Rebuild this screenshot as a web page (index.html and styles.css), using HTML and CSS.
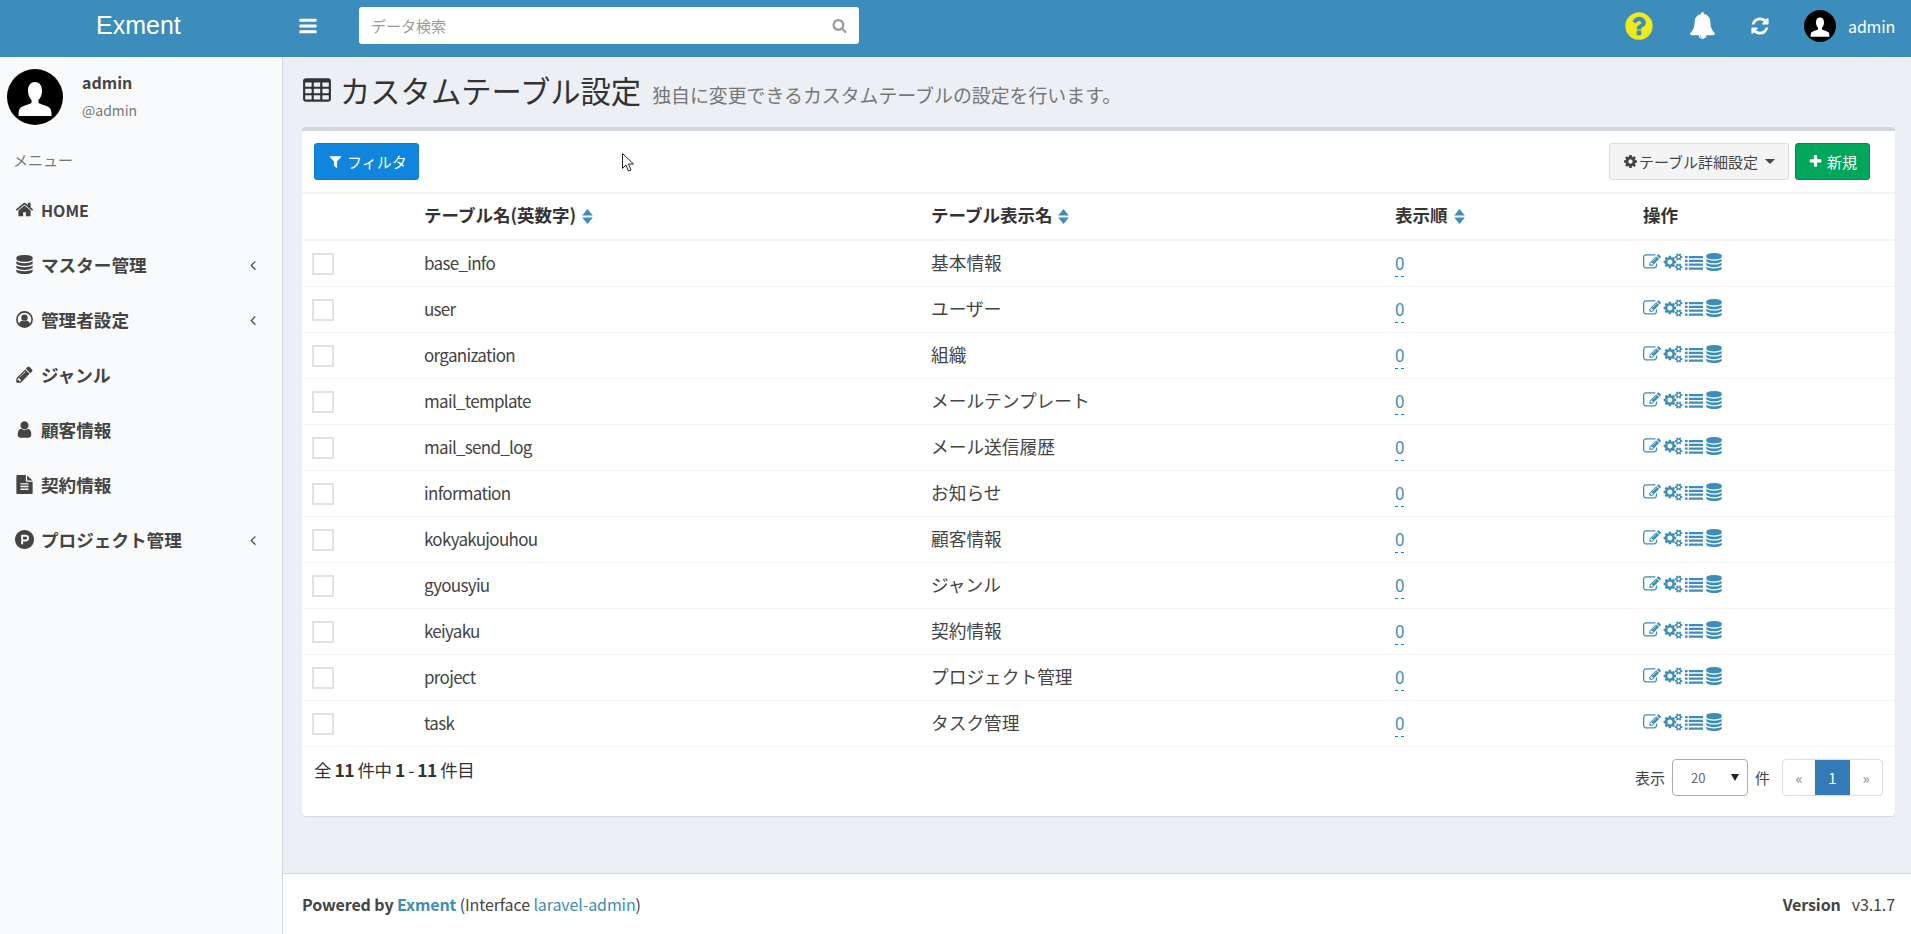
FILE: index.html
```html
<!DOCTYPE html>
<html lang="ja">
<head>
    <meta charset="UTF-8">
    <meta name="viewport" content="width=device-width, initial-scale=1.0">
    <title>カスタムテーブル設定 - Exment</title>
    <link rel="stylesheet" href="styles.css">
</head>
<body>
    <!-- icons -->
    <svg class="icon-defs" xmlns="http://www.w3.org/2000/svg">
        <symbol id="i-bars" viewBox="0 0 1792 1792"><path d="M1664 1344v128q0 26-19 45t-45 19h-1408q-26 0-45-19t-19-45v-128q0-26 19-45t45-19h1408q26 0 45 19t19 45zm0-512v128q0 26-19 45t-45 19h-1408q-26 0-45-19t-19-45v-128q0-26 19-45t45-19h1408q26 0 45 19t19 45zm0-512v128q0 26-19 45t-45 19h-1408q-26 0-45-19t-19-45v-128q0-26 19-45t45-19h1408q26 0 45 19t19 45z"/></symbol>
        <symbol id="i-search" viewBox="0 0 1792 1792"><path d="M1216 832q0-185-131.500-316.500t-316.500-131.500-316.500 131.500-131.500 316.500 131.500 316.500 316.500 131.500 316.500-131.500 131.500-316.500zm512 832q0 52-38 90t-90 38q-54 0-90-38l-343-342q-179 124-399 124-143 0-273.500-55.500t-225-150-150-225-55.500-273.500 55.500-273.500 150-225 225-150 273.500-55.500 273.500 55.500 225 150 150 225 55.500 273.500q0 220-124 399l343 343q37 37 37 90z"/></symbol>
        <symbol id="i-question" viewBox="0 0 1792 1792"><path d="M1024 1376v-192q0-14-9-23t-23-9h-192q-14 0-23 9t-9 23v192q0 14 9 23t23 9h192q14 0 23-9t9-23zm256-672q0-88-55.500-163t-138.500-116-170-41q-243 0-371 213-15 24 8 42l132 100q7 6 19 6 16 0 25-12 53-68 86-92 34-24 86-24 48 0 85.500 26t37.500 59q0 38-20 61t-68 45q-63 28-115.500 86.500t-52.500 125.500v36q0 14 9 23t23 9h192q14 0 23-9t9-23q0-19 21.500-49.500t54.500-49.500q32-18 49-28.500t46-35 44.500-48 28-60.500 12.500-81zm384 192q0 209-103 385.500t-279.500 279.500-385.500 103-385.500-103-279.500-279.500-103-385.500 103-385.500 279.500-279.500 385.500-103 385.500 103 279.500 279.500 103 385.500z"/></symbol>
        <symbol id="i-bell" viewBox="0 0 1792 1792"><path d="M912 1696q0-16-16-16-59 0-101.500-42.500t-42.500-101.500q0-16-16-16t-16 16q0 73 51.500 124.500t124.500 51.500q16 0 16-16zm816-288q0 52-38 90t-90 38h-448q0 106-75 181t-181 75-181-75-75-181h-448q-52 0-90-38t-38-90q50-42 91-88t85-119.500 74.500-158.500 50-206 19.500-260q0-152 117-282.500t307-158.500q-8-19-8-39 0-40 28-68t68-28 68 28 28 68q0 20-8 39 190 28 307 158.500t117 282.500q0 139 19.500 260t50 206 74.500 158.500 85 119.500 91 88z"/></symbol>
        <symbol id="i-refresh" viewBox="0 0 1792 1792"><path d="M1639 1056q0 5-1 7-64 268-268 434.500t-478 166.500q-146 0-282.500-55t-243.500-157l-129 129q-19 19-45 19t-45-19-19-45v-448q0-26 19-45t45-19h448q26 0 45 19t19 45-19 45l-137 137q71 66 161 102t187 36q134 0 250-65t186-179q11-17 53-117 8-23 30-23h192q13 0 22.500 9.500t9.500 22.500zm25-800v448q0 26-19 45t-45 19h-448q-26 0-45-19t-19-45 19-45l138-138q-148-137-349-137-134 0-250 65t-186 179q-11 17-53 117-8 23-30 23h-199q-13 0-22.500-9.500t-9.500-22.500v-7q65-268 270-434.500t480-166.500q146 0 284 55.500t245 156.500l130-129q19-19 45-19t45 19 19 45z"/></symbol>
        <symbol id="i-user" viewBox="0 0 1792 1792"><path d="M1536 1399q0 109-62.500 187t-150.500 78h-854q-88 0-150.500-78t-62.500-187q0-85 8.500-160.500t31.500-152 58.500-131 94-89 134.500-34.500q131 128 313 128t313-128q76 0 134.500 34.500t94 89 58.500 131 31.500 152 8.500 160.500zm-256-887q0 159-112.500 271.500t-271.500 112.500-271.500-112.500-112.500-271.500 112.500-271.500 271.500-112.500 271.500 112.500 112.500 271.500z"/></symbol>
        <symbol id="i-table" viewBox="0 0 1792 1792"><path d="M576 1376v-192q0-14-9-23t-23-9h-320q-14 0-23 9t-9 23v192q0 14 9 23t23 9h320q14 0 23-9t9-23zm0-384v-192q0-14-9-23t-23-9h-320q-14 0-23 9t-9 23v192q0 14 9 23t23 9h320q14 0 23-9t9-23zm512 384v-192q0-14-9-23t-23-9h-320q-14 0-23 9t-9 23v192q0 14 9 23t23 9h320q14 0 23-9t9-23zm-512-768v-192q0-14-9-23t-23-9h-320q-14 0-23 9t-9 23v192q0 14 9 23t23 9h320q14 0 23-9t9-23zm512 384v-192q0-14-9-23t-23-9h-320q-14 0-23 9t-9 23v192q0 14 9 23t23 9h320q14 0 23-9t9-23zm512 384v-192q0-14-9-23t-23-9h-320q-14 0-23 9t-9 23v192q0 14 9 23t23 9h320q14 0 23-9t9-23zm-512-768v-192q0-14-9-23t-23-9h-320q-14 0-23 9t-9 23v192q0 14 9 23t23 9h320q14 0 23-9t9-23zm512 384v-192q0-14-9-23t-23-9h-320q-14 0-23 9t-9 23v192q0 14 9 23t23 9h320q14 0 23-9t9-23zm0-384v-192q0-14-9-23t-23-9h-320q-14 0-23 9t-9 23v192q0 14 9 23t23 9h320q14 0 23-9t9-23zm128-320v1088q0 66-47 113t-113 47h-1344q-66 0-113-47t-47-113v-1088q0-66 47-113t113-47h1344q66 0 113 47t47 113z"/></symbol>
        <symbol id="i-filter" viewBox="0 0 1792 1792"><path d="M1595 295q17 41-14 70l-493 493v742q0 42-39 59-13 5-25 5-27 0-45-19l-256-256q-19-19-19-45v-486l-493-493q-31-29-14-70 17-39 59-39h1280q42 0 59 39z"/></symbol>
        <symbol id="i-cog" viewBox="0 0 1792 1792"><path d="M1152 896q0-106-75-181t-181-75-181 75-75 181 75 181 181 75 181-75 75-181zm512-109v222q0 12-8 23t-20 13l-185 28q-19 54-39 91 35 50 107 138 10 12 10 25t-9 23q-27 37-99 108t-94 71q-12 0-26-9l-138-108q-44 23-91 38-16 136-29 186-7 28-36 28h-222q-14 0-24.500-8.500t-11.500-21.500l-28-184q-49-16-90-37l-141 107q-10 9-25 9-14 0-25-11-126-114-165-168-7-10-7-23 0-12 8-23 15-21 51-66.500t54-70.500q-27-50-41-99l-183-27q-13-2-21-12.500t-8-23.500v-222q0-12 8-23t19-13l186-28q14-46 39-92-40-57-107-138-10-12-10-24 0-10 9-23 26-36 98.500-107.500t94.500-71.500q13 0 26 10l138 107q44-23 91-38 16-136 29-186 7-28 36-28h222q14 0 24.500 8.500t11.500 21.500l28 184q49 16 90 37l142-107q9-9 24-9 13 0 25 10 129 119 165 170 7 8 7 22 0 12-8 23-15 21-51 66.500t-54 70.500q26 50 41 98l183 28q13 2 21 12.500t8 23.500z"/></symbol>
        <symbol id="i-plus" viewBox="0 0 1792 1792"><path d="M1600 736v192q0 40-28 68t-68 28h-416v416q0 40-28 68t-68 28h-192q-40 0-68-28t-28-68v-416h-416q-40 0-68-28t-28-68v-192q0-40 28-68t68-28h416v-416q0-40 28-68t68-28h192q40 0 68 28t28 68v416h416q40 0 68 28t28 68z"/></symbol>
        <symbol id="i-home" viewBox="0 0 1792 1792"><path d="M1472 992v480q0 26-19 45t-45 19h-384v-384h-256v384h-384q-26 0-45-19t-19-45v-480q0-1 .5-3t.5-3l575-474 575 474q1 2 1 6zm223-69l-62 74q-8 9-21 11h-3q-13 0-21-7l-692-577-692 577q-12 8-24 7-13-2-21-11l-62-74q-8-10-7-23.500t11-21.500l719-599q32-26 76-26t76 26l244 204v-195q0-14 9-23t23-9h192q14 0 23 9t9 23v408l219 182q10 8 11 21.500t-7 23.500z"/></symbol>
        <symbol id="i-database" viewBox="0 0 1792 1792"><path d="M896 768q237 0 443-43t325-127v170q0 69-103 128t-280 93.500-385 34.500-385-34.500-280-93.500-103-128v-170q119 84 325 127t443 43zm0 768q237 0 443-43t325-127v170q0 69-103 128t-280 93.500-385 34.500-385-34.500-280-93.500-103-128v-170q119 84 325 127t443 43zm0-384q237 0 443-43t325-127v170q0 69-103 128t-280 93.500-385 34.500-385-34.500-280-93.500-103-128v-170q119 84 325 127t443 43zm0-1152q208 0 385 34.500t280 93.500 103 128v128q0 69-103 128t-280 93.500-385 34.500-385-34.500-280-93.500-103-128v-128q0-69 103-128t280-93.500 385-34.500z"/></symbol>
        <symbol id="i-user-circle" viewBox="0 0 1792 1792"><circle cx="896" cy="896" r="720" fill="none" stroke="currentColor" stroke-width="150"/><circle cx="896" cy="720" r="300"/><path d="M380 1340q60-300 300-330 100 60 216 60t216-60q240 30 300 330-210 230-516 230t-516-230z"/></symbol>
        <symbol id="i-pencil" viewBox="0 0 1792 1792"><path d="M491 1536l91-91-235-235-91 91v107h128v128h107zm523-928q0-22-22-22-10 0-17 7l-542 542q-7 7-7 17 0 22 22 22 10 0 17-7l542-542q7-7 7-17zm-54-192l416 416-832 832h-416v-416zm683 96q0 53-37 90l-166 166-416-416 166-165q36-38 90-38 53 0 91 38l235 234q37 39 37 91z"/></symbol>
        <symbol id="i-file" viewBox="0 0 1792 1792"><path d="M1596 476q14 14 28 36h-472v-472q22 14 36 28zm-476 164h544v1056q0 40-28 68t-68 28h-1344q-40 0-68-28t-28-68v-1600q0-40 28-68t68-28h800v544q0 40 28 68t68 28zm160 736v-64q0-14-9-23t-23-9h-704q-14 0-23 9t-9 23v64q0 14 9 23t23 9h704q14 0 23-9t9-23zm0-256v-64q0-14-9-23t-23-9h-704q-14 0-23 9t-9 23v64q0 14 9 23t23 9h704q14 0 23-9t9-23zm0-256v-64q0-14-9-23t-23-9h-704q-14 0-23 9t-9 23v64q0 14 9 23t23 9h704q14 0 23-9t9-23z"/></symbol>
        <symbol id="i-product" viewBox="0 0 1792 1792"><path d="M1150 762q0 56-39.500 95t-95.500 39h-253v-269h253q56 0 95.500 39.500t39.500 95.500zm179 0q0-130-91.500-222t-222.500-92h-433v896h180v-269h253q130 0 222-91.500t92-221.500zm463 134q0 182-71 348t-191 286-286 191-348 71-348-71-286-191-191-286-71-348 71-348 191-286 286-191 348-71 348 71 286 191 191 286 71 348z"/></symbol>
        <symbol id="i-angle-left" viewBox="0 0 1792 1792"><path d="M1203 544q0 13-10 23l-393 393 393 393q10 10 10 23t-10 23l-50 50q-10 10-23 10t-23-10l-466-466q-10-10-10-23t10-23l466-466q10-10 23-10t23 10l50 50q10 10 10 23z"/></symbol>
        <symbol id="i-edit" viewBox="0 0 1792 1792"><path d="M888 1184l116-116-152-152-116 116v56h96v96h56zm440-720q-16-16-33 1l-350 350q-17 17-1 33t33-1l350-350q17-17 1-33zm80 594v190q0 119-84.500 203.500t-203.500 84.500h-832q-119 0-203.500-84.500t-84.500-203.500v-832q0-119 84.500-203.500t203.500-84.500h832q63 0 117 25 15 7 18 23 3 17-9 29l-49 49q-14 14-32 8-23-6-45-6h-832q-66 0-113 47t-47 113v832q0 66 47 113t113 47h832q66 0 113-47t47-113v-126q0-13 9-22l64-64q15-15 35-7t20 29zm-96-738l288 288-672 672h-288v-288zm444 132l-92 92-288-288 92-92q28-28 68-28t68 28l152 152q28 28 28 68t-28 68z"/></symbol>
        <symbol id="i-cogs" viewBox="0 0 2048 1792"><path d="M960 896q0-106-75-181t-181-75-181 75-75 181 75 181 181 75 181-75 75-181zm768 512q0-52-38-90t-90-38-90 38-38 90q0 53 37.500 90.500t90.500 37.500 90.500-37.500 37.500-90.500zm0-1024q0-52-38-90t-90-38-90 38-38 90q0 53 37.500 90.500t90.500 37.500 90.500-37.500 37.500-90.500zm-384 421v185q0 10-7 19.500t-16 10.500l-155 24q-11 35-32 76 34 48 90 115 7 11 7 20 0 12-7 19-23 30-82.500 89.500t-78.500 59.500q-11 0-21-7l-115-90q-37 19-77 31-11 108-23 155-7 24-30 24h-186q-11 0-20-7.500t-10-17.500l-23-153q-34-10-75-31l-118 89q-7 7-20 7-11 0-21-8-144-133-144-160 0-9 7-19 10-14 41-53t47-61q-23-44-35-82l-152-24q-10-1-17-9.500t-7-19.500v-185q0-10 7-19.500t16-10.500l155-24q11-35 32-76-34-48-90-115-7-11-7-20 0-12 7-20 22-30 82-89t79-59q11 0 21 7l115 90q34-18 77-32 11-108 23-154 7-24 30-24h186q11 0 20 7.500t10 17.500l23 153q34 10 75 31l118-89q8-7 20-7 11 0 21 8 144 133 144 160 0 8-7 19-12 16-42 54t-45 60q23 48 34 82l152 23q10 2 17 10.500t7 19.500zm640 533v140q0 16-149 31-12 27-30 52 51 113 51 138 0 4-4 7-122 71-124 71-8 0-46-47t-52-68q-20 2-30 2t-30-2q-14 21-52 68t-46 47q-2 0-124-71-4-3-4-7 0-25 51-138-18-25-30-52-149-15-149-31v-140q0-16 149-31 13-29 30-52-51-113-51-138 0-4 4-7 4-2 35-20t59-34 30-16q8 0 46 46.500t52 67.500q20-2 30-2t30 2q51-71 92-112l6-2q4 0 124 70 4 3 4 7 0 25-51 138 17 23 30 52 149 15 149 31zm0-1024v140q0 16-149 31-12 27-30 52 51 113 51 138 0 4-4 7-122 71-124 71-8 0-46-47t-52-68q-20 2-30 2t-30-2q-14 21-52 68t-46 47q-2 0-124-71-4-3-4-7 0-25 51-138-18-25-30-52-149-15-149-31v-140q0-16 149-31 13-29 30-52-51-113-51-138 0-4 4-7 4-2 35-20t59-34 30-16q8 0 46 46.500t52 67.500q20-2 30-2t30 2q51-71 92-112l6-2q4 0 124 70 4 3 4 7 0 25-51 138 17 23 30 52 149 15 149 31z"/></symbol>
        <symbol id="i-list" viewBox="0 0 1792 1792"><path d="M0 288h256v224h-256zm384 0h1408v224h-1408zm-384 384h256v224h-256zm384 0h1408v224h-1408zm-384 384h256v224h-256zm384 0h1408v224h-1408zm-384 384h256v224h-256zm384 0h1408v224h-1408z"/></symbol>
        <symbol id="i-sort" viewBox="0 0 10 14"><path d="M5 0l5 6h-10zM5 14l-5-6h10z"/></symbol>
        <symbol id="i-avatar" viewBox="0 0 56 56"><circle cx="28" cy="28" r="28" fill="#000"/><path fill="#fff" d="M28 13c5 0 7 4 7 9 0 4-1.500 7-3.500 9v3c2 1.500 10 2.500 12 6 1 2 1 5 1 7h-33c0-2 0-5 1-7 2-3.500 10-4.500 12-6v-3c-2-2-3.500-5-3.500-9 0-5 2-9 7-9z"/></symbol>
    </svg>

    <header class="main-header">
        <a class="logo">Exment</a>
        <svg class="toggle-icon"><use href="#i-bars"/></svg>
        <div class="search-box">
            <span class="search-text">データ検索</span>
            <svg class="search-icon"><use href="#i-search"/></svg>
        </div>
        <nav class="header-menu">
            <svg class="help-icon"><use href="#i-question"/></svg>
            <svg class="bell-icon"><use href="#i-bell"/></svg>
            <svg class="refresh-icon"><use href="#i-refresh"/></svg>
            <svg class="header-avatar"><use href="#i-avatar"/></svg>
            <span class="header-user">admin</span>
        </nav>
    </header>

    <div class="wrapper">
        <aside class="sidebar">
            <div class="user-panel">
                <svg class="user-avatar"><use href="#i-avatar"/></svg>
                <div class="user-info">
                    <p class="user-name">admin</p>
                    <p class="user-id">@admin</p>
                </div>
            </div>
            <div class="menu-header">メニュー</div>
            <ul class="menu">
                <li class="menu-item menu-home"><svg class="menu-icon"><use href="#i-home"/></svg><span>HOME</span></li>
                <li class="menu-item"><svg class="menu-icon"><use href="#i-database"/></svg><span>マスター管理</span><svg class="menu-arrow"><use href="#i-angle-left"/></svg></li>
                <li class="menu-item"><svg class="menu-icon"><use href="#i-user-circle"/></svg><span>管理者設定</span><svg class="menu-arrow"><use href="#i-angle-left"/></svg></li>
                <li class="menu-item"><svg class="menu-icon"><use href="#i-pencil"/></svg><span>ジャンル</span></li>
                <li class="menu-item"><svg class="menu-icon"><use href="#i-user"/></svg><span>顧客情報</span></li>
                <li class="menu-item"><svg class="menu-icon"><use href="#i-file"/></svg><span>契約情報</span></li>
                <li class="menu-item"><svg class="menu-icon"><use href="#i-product"/></svg><span>プロジェクト管理</span><svg class="menu-arrow"><use href="#i-angle-left"/></svg></li>
            </ul>
        </aside>

        <div class="content-wrapper">
            <main class="content">
                <div class="content-header">
                    <svg class="title-icon"><use href="#i-table"/></svg>
                    <h1>カスタムテーブル設定</h1>
                    <small>独自に変更できるカスタムテーブルの設定を行います。</small>
                </div>

                <section class="box">
                    <div class="box-header">
                        <button class="btn btn-filter"><svg class="btn-icon"><use href="#i-filter"/></svg>フィルタ</button>
                        <div class="box-tools">
                            <button class="btn btn-default"><svg class="btn-icon"><use href="#i-cog"/></svg>テーブル詳細設定<span class="caret"></span></button>
                            <button class="btn btn-new"><svg class="btn-icon"><use href="#i-plus"/></svg>新規</button>
                        </div>
                    </div>

                    <table class="grid-table">
                        <colgroup>
                            <col class="col-check"><col class="col-name"><col class="col-view"><col class="col-order"><col>
                        </colgroup>
                        <thead>
                            <tr>
                                <th></th>
                                <th>テーブル名(英数字)<svg class="sort-icon"><use href="#i-sort"/></svg></th>
                                <th>テーブル表示名<svg class="sort-icon"><use href="#i-sort"/></svg></th>
                                <th>表示順<svg class="sort-icon"><use href="#i-sort"/></svg></th>
                                <th>操作</th>
                            </tr>
                        </thead>
                        <tbody>
                            <tr><td><span class="check"></span></td><td>base_info</td><td>基本情報</td><td><a class="editable">0</a></td><td><span class="actions"><svg class="a-edit"><use href="#i-edit"/></svg><svg class="a-cogs"><use href="#i-cogs"/></svg><svg class="a-list"><use href="#i-list"/></svg><svg class="a-db"><use href="#i-database"/></svg></span></td></tr>
                            <tr><td><span class="check"></span></td><td>user</td><td>ユーザー</td><td><a class="editable">0</a></td><td><span class="actions"><svg class="a-edit"><use href="#i-edit"/></svg><svg class="a-cogs"><use href="#i-cogs"/></svg><svg class="a-list"><use href="#i-list"/></svg><svg class="a-db"><use href="#i-database"/></svg></span></td></tr>
                            <tr><td><span class="check"></span></td><td>organization</td><td>組織</td><td><a class="editable">0</a></td><td><span class="actions"><svg class="a-edit"><use href="#i-edit"/></svg><svg class="a-cogs"><use href="#i-cogs"/></svg><svg class="a-list"><use href="#i-list"/></svg><svg class="a-db"><use href="#i-database"/></svg></span></td></tr>
                            <tr><td><span class="check"></span></td><td>mail_template</td><td>メールテンプレート</td><td><a class="editable">0</a></td><td><span class="actions"><svg class="a-edit"><use href="#i-edit"/></svg><svg class="a-cogs"><use href="#i-cogs"/></svg><svg class="a-list"><use href="#i-list"/></svg><svg class="a-db"><use href="#i-database"/></svg></span></td></tr>
                            <tr><td><span class="check"></span></td><td>mail_send_log</td><td>メール送信履歴</td><td><a class="editable">0</a></td><td><span class="actions"><svg class="a-edit"><use href="#i-edit"/></svg><svg class="a-cogs"><use href="#i-cogs"/></svg><svg class="a-list"><use href="#i-list"/></svg><svg class="a-db"><use href="#i-database"/></svg></span></td></tr>
                            <tr><td><span class="check"></span></td><td>information</td><td>お知らせ</td><td><a class="editable">0</a></td><td><span class="actions"><svg class="a-edit"><use href="#i-edit"/></svg><svg class="a-cogs"><use href="#i-cogs"/></svg><svg class="a-list"><use href="#i-list"/></svg><svg class="a-db"><use href="#i-database"/></svg></span></td></tr>
                            <tr><td><span class="check"></span></td><td>kokyakujouhou</td><td>顧客情報</td><td><a class="editable">0</a></td><td><span class="actions"><svg class="a-edit"><use href="#i-edit"/></svg><svg class="a-cogs"><use href="#i-cogs"/></svg><svg class="a-list"><use href="#i-list"/></svg><svg class="a-db"><use href="#i-database"/></svg></span></td></tr>
                            <tr><td><span class="check"></span></td><td>gyousyiu</td><td>ジャンル</td><td><a class="editable">0</a></td><td><span class="actions"><svg class="a-edit"><use href="#i-edit"/></svg><svg class="a-cogs"><use href="#i-cogs"/></svg><svg class="a-list"><use href="#i-list"/></svg><svg class="a-db"><use href="#i-database"/></svg></span></td></tr>
                            <tr><td><span class="check"></span></td><td>keiyaku</td><td>契約情報</td><td><a class="editable">0</a></td><td><span class="actions"><svg class="a-edit"><use href="#i-edit"/></svg><svg class="a-cogs"><use href="#i-cogs"/></svg><svg class="a-list"><use href="#i-list"/></svg><svg class="a-db"><use href="#i-database"/></svg></span></td></tr>
                            <tr><td><span class="check"></span></td><td>project</td><td>プロジェクト管理</td><td><a class="editable">0</a></td><td><span class="actions"><svg class="a-edit"><use href="#i-edit"/></svg><svg class="a-cogs"><use href="#i-cogs"/></svg><svg class="a-list"><use href="#i-list"/></svg><svg class="a-db"><use href="#i-database"/></svg></span></td></tr>
                            <tr><td><span class="check"></span></td><td>task</td><td>タスク管理</td><td><a class="editable">0</a></td><td><span class="actions"><svg class="a-edit"><use href="#i-edit"/></svg><svg class="a-cogs"><use href="#i-cogs"/></svg><svg class="a-list"><use href="#i-list"/></svg><svg class="a-db"><use href="#i-database"/></svg></span></td></tr>
                        </tbody>
                    </table>

                    <div class="box-footer">
                        <div class="total">全 <b>11</b> 件中 <b>1</b> - <b>11</b> 件目</div>
                        <div class="paging">
                            <span>表示</span>
                            <div class="per-page"><span class="per-page-value">20</span><span class="per-page-arrow"></span></div>
                            <span>件</span>
                            <ul class="pagination">
                                <li>«</li>
                                <li class="active">1</li>
                                <li>»</li>
                            </ul>
                        </div>
                    </div>
                </section>
            </main>

            <footer class="main-footer">
                <div class="powered"><b>Powered by</b> <a class="footer-strong">Exment</a> (Interface <a>laravel-admin</a>)</div>
                <div class="version"><b>Version</b><span>v3.1.7</span></div>
            </footer>
        </div>
    </div>

    <!-- mouse pointer in the shot -->
    <svg class="pointer" viewBox="0 0 12 19"><path d="M.5.5v15l3.500-3.500 2.500 6 2.500-1-2.500-6h5z" fill="#fff" stroke="#222" stroke-width="1"/></svg>
</body>
</html>
```
FILE: styles.css
```css
* {
    box-sizing: border-box;
}

html, body {
    height: 100%;
}

body {
    margin: 0;
    overflow: hidden;
    font-family: "Noto Sans CJK JP", "Noto Sans", sans-serif;
    font-size: 17px;
    color: #333;
    background-color: #ecf0f5;
}

a {
    color: #3c8dbc;
}

svg {
    fill: currentColor;
    display: block;
    flex: none;
}

.icon-defs {
    display: none;
}

/* header */
.main-header {
    height: 57px;
    padding-bottom: 6px;
    background-color: #3c8dbc;
    color: #fff;
    display: flex;
    align-items: center;
}

.logo {
    width: 283px;
    padding-left: 96px;
    color: #fff;
    font-family: "Liberation Sans", sans-serif;
    font-size: 25px;
}

.toggle-icon {
    width: 20px;
    height: 20px;
    margin-left: 15px;
}

.search-box {
    width: 500px;
    height: 37px;
    margin-left: 41px;
    padding: 0 12px;
    background-color: #fff;
    border-radius: 3px;
    display: flex;
    align-items: center;
    justify-content: space-between;
}

.search-text {
    font-size: 15px;
    color: #999;
}

.search-icon {
    width: 15px;
    height: 15px;
    color: #999;
}

.header-menu {
    margin-left: auto;
    padding-right: 16px;
    display: flex;
    align-items: center;
}

.help-icon {
    width: 32px;
    height: 32px;
    color: #eeea1c;
}

.bell-icon {
    width: 27px;
    height: 27px;
    margin-left: 34px;
}

.refresh-icon {
    width: 20px;
    height: 20px;
    margin-left: 34px;
}

.header-avatar {
    width: 32px;
    height: 32px;
    margin-left: 34px;
}

.header-user {
    margin-left: 12px;
    font-size: 16px;
    letter-spacing: -0.2px;
}

/* layout */
.wrapper {
    height: 877px;
    display: flex;
}

.sidebar {
    width: 283px;
    background-color: #f9fafc;
    border-right: 1px solid #d2d6de;
}

.user-panel {
    padding: 12px 0 0 7px;
    display: flex;
}

.user-avatar {
    width: 56px;
    height: 56px;
}

.user-info {
    margin-left: 19px;
}

.user-name {
    margin: 0;
    font-size: 16px;
    font-weight: 700;
    color: #444;
    line-height: 26px;
}

.user-id {
    margin: 3px 0 0;
    font-size: 14px;
    color: #777;
    line-height: 24px;
}

.menu-header {
    margin-top: 23px;
    padding-left: 13px;
    font-size: 15px;
    color: #777;
    line-height: 24px;
}

.menu {
    list-style: none;
    margin: 10px 0 0;
    padding: 0;
}

.menu-item {
    height: 55px;
    padding: 0 21px 0 15px;
    display: flex;
    align-items: center;
    font-size: 17.600px;
    font-weight: 700;
    color: #444;
}

.menu-home {
    font-size: 16px;
}

.menu-icon {
    width: 19px;
    height: 19px;
    margin-right: 7px;
}

.menu-arrow {
    width: 16px;
    height: 16px;
    margin-left: auto;
}

/* content */
.content-wrapper {
    flex: 1;
    min-width: 0;
    display: flex;
    flex-direction: column;
}

.content {
    flex: 1;
    padding: 0 16px 0 19px;
}

.content-header {
    height: 70px;
    padding-bottom: 5px;
    display: flex;
    align-items: center;
}

.title-icon {
    width: 30px;
    height: 30px;
    margin-top: 2px;
    margin-right: 8px;
    color: #333;
}

.content-header h1 {
    margin: 0;
    font-size: 30.300px;
    font-weight: 400;
    line-height: 40px;
}

.content-header small {
    margin: 9px 0 0 11px;
    font-size: 18.900px;
    color: #777;
}

.box {
    background-color: #fff;
    border-top: 4px solid #d2d6de;
    border-radius: 4px;
    box-shadow: 0 1px 1px rgba(0, 0, 0, 0.1);
    height: 689px;
}

.box-header {
    height: 63px;
    padding: 12px 25px 0 12px;
    border-bottom: 2px solid #f4f4f4;
    display: flex;
    justify-content: space-between;
}

.box-tools {
    display: flex;
    gap: 6px;
}

.btn {
    height: 37px;
    padding: 0 13px;
    border: 1px solid transparent;
    border-radius: 3px;
    font: inherit;
    font-size: 15px;
    white-space: nowrap;
    display: flex;
    align-items: center;
}

.btn-icon {
    width: 15px;
    height: 15px;
    margin-right: 4px;
}

.btn-filter {
    width: 105px;
    color: #fff;
    background-color: #0f85de;
    border-color: #0d7ccf;
}

.btn-default {
    width: 180px;
    color: #444;
    background-color: #f4f4f4;
    border-color: #ddd;
}

.btn-default .btn-icon {
    margin-right: 1px;
}

.btn-new {
    width: 75px;
    padding: 0 12px;
    color: #fff;
    background-color: #00a65a;
    border-color: #008d4c;
}

.caret {
    margin-left: 7px;
    border-top: 5px solid #444;
    border-left: 5px solid transparent;
    border-right: 5px solid transparent;
}

/* table */
.grid-table {
    width: 100%;
    border-collapse: collapse;
    table-layout: fixed;
}

.col-check {
    width: 112px;
}

.col-name {
    width: 507px;
}

.col-view {
    width: 464px;
}

.col-order {
    width: 248px;
}

.grid-table th,
.grid-table td {
    padding: 0 10px 2px;
    text-align: left;
}

.grid-table th {
    height: 46px;
    padding-bottom: 4px;
    border-bottom: 2px solid #f4f4f4;
    font-size: 17.500px;
    font-weight: 700;
}

.grid-table td {
    height: 46px;
    border-bottom: 1px solid #f4f4f4;
    color: #444;
}

.grid-table td:nth-child(2) {
    letter-spacing: -0.7px;
}

.grid-table td:nth-child(3) {
    font-size: 17.700px;
}

.sort-icon {
    display: inline-block;
    width: 11px;
    height: 15px;
    margin-left: 6px;
    vertical-align: -2px;
    color: #3c8dbc;
}

.check {
    display: block;
    width: 22px;
    height: 22px;
    margin-top: 4px;
    background-color: #fff;
    border: 2px solid #e2e2e2;
}

.editable {
    color: #3c8dbc;
    border-bottom: 1px dashed #0088cc;
    padding-bottom: 1px;
}

.actions {
    display: flex;
    align-items: center;
    gap: 2px;
    color: #3c8dbc;
}

.a-edit {
    width: 18px;
    height: 18px;
}

.a-cogs {
    width: 20px;
    height: 18px;
}

.a-list {
    width: 18px;
    height: 18px;
}

.a-db {
    width: 18px;
    height: 18px;
}

/* box footer */
.box-footer {
    padding: 12px 12px 0;
    display: flex;
    justify-content: space-between;
}

.total {
    font-size: 17.500px;
    letter-spacing: -0.5px;
    line-height: 22px;
}

.paging {
    display: flex;
    align-items: center;
    font-size: 15px;
    color: #444;
}

.per-page {
    position: relative;
    width: 76px;
    height: 37px;
    margin: 0 7px;
    padding-left: 18px;
    border: 1px solid #aaa;
    border-radius: 4px;
    font-size: 13px;
    color: #667;
    display: flex;
    align-items: center;
}

.per-page-arrow {
    position: absolute;
    right: 8px;
    top: 14px;
    border-top: 7px solid #222;
    border-left: 4px solid transparent;
    border-right: 4px solid transparent;
}

.pagination {
    list-style: none;
    margin: 0 0 0 12px;
    padding: 0;
    height: 37px;
    width: 101px;
    display: flex;
    border: 1px solid #ddd;
    border-radius: 4px;
    overflow: hidden;
    font-size: 15px;
    color: #888;
}

.pagination li {
    flex: 1;
    display: flex;
    align-items: center;
    justify-content: center;
}

.pagination .active {
    flex: none;
    width: 35px;
    background-color: #337ab7;
    color: #fff;
}

/* footer */
.main-footer {
    height: 61px;
    padding: 0 16px 0 19px;
    background-color: #fff;
    border-top: 1px solid #d2d6de;
    display: flex;
    align-items: center;
    justify-content: space-between;
    font-size: 16px;
    letter-spacing: -0.1px;
    color: #444;
}

.footer-strong {
    font-weight: 700;
}

.version span {
    margin-left: 11px;
}

/* mouse pointer */
.pointer {
    position: absolute;
    left: 622px;
    top: 153px;
    width: 12px;
    height: 19px;
}
```
